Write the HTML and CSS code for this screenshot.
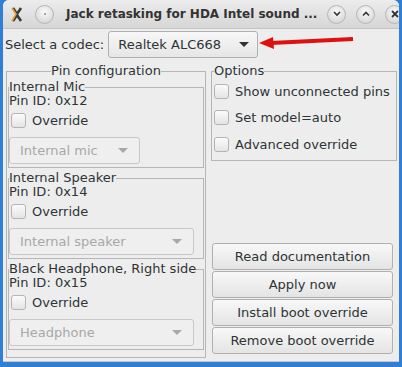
FILE: index.html
```html
<!DOCTYPE html>
<html lang="en">
<head>
  <meta name="viewport" content="width=device-width, initial-scale=1.0">
  <title>Jack retasking</title>
  <link rel="stylesheet" href="styles.css">
</head>
<body>

<div class="window">
  <div class="titlebar">
    <svg class="app-icon" width="12" height="15" viewBox="0 0 12 15">
      <path d="M2 1 L6 7 L10 1 M2 14 L6 8 L10 14" stroke="#3a3a3a" stroke-width="2.6" fill="none"/>
      <path d="M1 1 L5 7 L1 14" stroke="#e8a030" stroke-width="1.6" fill="none"/>
    </svg>
    <span class="tb-btn menu"><span class="dot"></span></span>
    <span class="title">Jack retasking for HDA Intel sound ...</span>
    <span class="tb-btn">
      <svg width="10" height="10" viewBox="0 0 10 10"><path d="M2 3 L5 6 L8 3" stroke="#333" stroke-width="1.6" fill="none"/></svg>
    </span>
    <span class="tb-btn">
      <svg width="10" height="10" viewBox="0 0 10 10"><path d="M2 6.5 L5 3.5 L8 6.5" stroke="#333" stroke-width="1.6" fill="none"/></svg>
    </span>
    <span class="tb-btn">
      <svg width="10" height="10" viewBox="0 0 10 10"><path d="M2 2 L8 8 M8 2 L2 8" stroke="#333" stroke-width="1.8" fill="none"/></svg>
    </span>
  </div>

  <div class="content">
    <div class="codec-row">
      <span>Select a codec:</span>
      <div class="combo codec">
        <span>Realtek ALC668</span>
        <span class="arrow"></span>
      </div>
      <svg class="red-arrow" width="96" height="14" viewBox="0 0 96 14">
        <path d="M12 8 L94 4" stroke="#e01010" stroke-width="4"/>
        <path d="M0 8 L14 2 L15 14 Z" fill="#e01010"/>
      </svg>
    </div>

    <div class="columns">
      <fieldset class="frame pins">
        <legend class="center">Pin configuration</legend>

        <fieldset class="frame pin">
          <legend>Internal Mic</legend>
          <div class="pin-id">Pin ID: 0x12</div>
          <label class="check"><span class="box"></span>Override</label>
          <div class="combo disabled short"><span>Internal mic</span><span class="arrow"></span></div>
        </fieldset>

        <fieldset class="frame pin">
          <legend>Internal Speaker</legend>
          <div class="pin-id">Pin ID: 0x14</div>
          <label class="check"><span class="box"></span>Override</label>
          <div class="combo disabled"><span>Internal speaker</span><span class="arrow"></span></div>
        </fieldset>

        <fieldset class="frame pin">
          <legend>Black Headphone, Right side</legend>
          <div class="pin-id">Pin ID: 0x15</div>
          <label class="check"><span class="box"></span>Override</label>
          <div class="combo disabled"><span>Headphone</span><span class="arrow"></span></div>
        </fieldset>
      </fieldset>

      <div class="right">
        <fieldset class="frame options">
          <legend>Options</legend>
          <label class="check"><span class="box"></span>Show unconnected pins</label>
          <label class="check"><span class="box"></span>Set model=auto</label>
          <label class="check"><span class="box"></span>Advanced override</label>
        </fieldset>

        <div class="buttons">
          <button class="btn">Read documentation</button>
          <button class="btn">Apply now</button>
          <button class="btn">Install boot override</button>
          <button class="btn">Remove boot override</button>
        </div>
      </div>
    </div>
  </div>
</div>

</body>
</html>
```

FILE: styles.css
```css
body {
  margin: 0;
  background: #2f7fd6;
  font-family: "DejaVu Sans", sans-serif;
  font-size: 13px;
  color: #2e3436;
}
.window {
  margin: 0 3px;
  height: 362px;
  background: #ededed;
  border-radius: 6px 6px 0 0;
  border-bottom: 1px solid #c8c8c8;
  box-sizing: border-box;
  overflow: hidden;
}
.titlebar {
  height: 29px;
  display: flex;
  align-items: center;
  padding: 0 9px 0 8px;
  background: linear-gradient(#ececec, #d6d6d6);
  border-bottom: 1px solid #c4c4c4;
  box-sizing: border-box;
}
.titlebar > * {
  flex-shrink: 0;
}
.app-icon {
  margin-right: 12px;
}
.title {
  flex: 1;
  font-weight: bold;
  font-size: 12px;
  color: #333;
  margin-left: 12px;
  white-space: nowrap;
}
.tb-btn {
  width: 17px;
  height: 17px;
  border-radius: 50%;
  background: radial-gradient(circle at 50% 35%, #fafafa, #cfcfcf);
  border: 1px solid #b5b5b5;
  display: flex;
  align-items: center;
  justify-content: center;
  margin-left: 10px;
}
.tb-btn.menu {
  margin-left: 0;
}
.tb-btn .dot {
  width: 2px;
  height: 2px;
  border-radius: 50%;
  background: #888;
}
.content {
  padding: 2px 2px 0 2px;
}
.codec-row {
  display: flex;
  align-items: center;
  height: 27px;
}
.codec-row > span {
  margin: 0 4px 0 0;
}
.combo {
  display: flex;
  align-items: center;
  justify-content: space-between;
  height: 27px;
  box-sizing: border-box;
  border: 1px solid #b0b0b0;
  border-radius: 3px;
  background: linear-gradient(#f7f7f7, #e6e6e6);
  padding: 0 8px 0 9px;
}
.combo.codec {
  width: 150px;
}
.arrow {
  width: 0;
  height: 0;
  border-left: 5px solid transparent;
  border-right: 5px solid transparent;
  border-top: 5px solid #2e3436;
}
.red-arrow {
  margin-left: 1px;
  margin-top: -6px;
}
.columns {
  display: flex;
  gap: 5px;
  margin-top: 6px;
}
.frame {
  margin: 0;
  padding: 0;
  border: 1px solid #b6b6b6;
  min-width: 0;
}
.frame legend {
  padding: 0;
  margin-left: 2px;
  line-height: 14px;
}
.frame legend.center {
  margin: 0 auto;
}
.pins {
  width: 200px;
  box-sizing: border-box;
  padding: 0 0 7px 0;
  margin-left: 1px;
}
.pin {
  padding: 0 0 3px 0;
  margin: 3px 1px 0 1px;
}
.pin:first-of-type {
  margin-top: 2px;
}
.pin legend {
  margin-left: 0;
}
.pin-id {
  line-height: 13px;
}
.check {
  display: flex;
  align-items: center;
  height: 26px;
}
.box {
  width: 15px;
  height: 15px;
  box-sizing: border-box;
  border: 1px solid #b4b4b4;
  border-radius: 3px;
  background: linear-gradient(#fbfbfb, #e4e4e4);
  margin: 0 6px 0 2px;
}
.pin .check {
  margin-bottom: 4px;
}
.combo.disabled {
  color: #a8a8a8;
  border-color: #c8c8c8;
  background: #efefef;
  width: 185px;
  padding: 0 11px 0 10px;
}
.combo.disabled.short {
  width: 131px;
}
.combo.disabled .arrow {
  border-top-color: #a8a8a8;
}
.right {
  flex: 1;
  display: flex;
  flex-direction: column;
}
.options {
  padding: 0 0 2px 0;
}
.options .check {
  height: 26.5px;
}
.buttons {
  display: flex;
  flex-direction: column;
  gap: 1px;
  margin: auto 4px 4px 1px;
}
.btn {
  height: 27px;
  font-family: "DejaVu Sans", sans-serif;
  font-size: 13px;
  color: #2e3436;
  border: 1px solid #b0b0b0;
  border-radius: 3px;
  background: linear-gradient(#f8f8f8, #e4e4e4);
  padding: 0;
}
```
